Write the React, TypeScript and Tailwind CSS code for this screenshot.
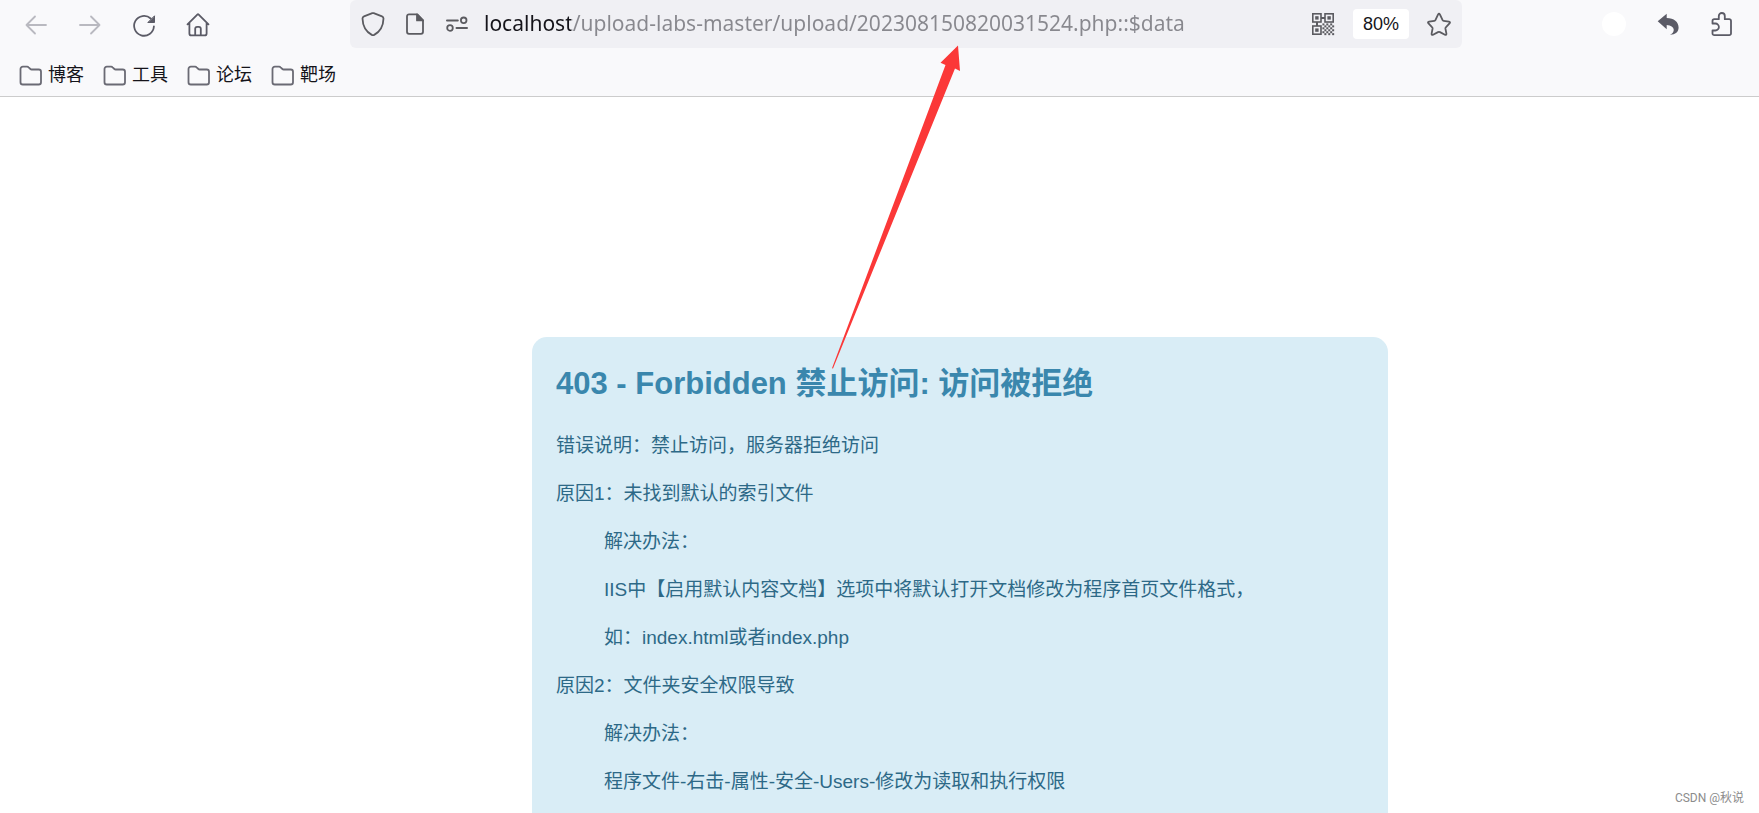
import type { ReactNode } from 'react';

const HAN = 'font-["Liberation_Sans","Noto_Sans_CJK_SC",sans-serif]';

function Icon({ children, className = '' }: { children: ReactNode; className?: string }) {
  return (
    <svg
      viewBox="0 0 24 24"
      aria-hidden="true"
      className={`size-6 shrink-0 overflow-visible ${className}`}
      fill="none"
      stroke="currentColor"
      strokeWidth="1.8"
      strokeLinecap="round"
      strokeLinejoin="round"
    >
      {children}
    </svg>
  );
}

function NavButton({ label, disabled, children }: { label: string; disabled?: boolean; children: ReactNode }) {
  return (
    <button
      type="button"
      aria-label={label}
      disabled={disabled}
      className="flex h-12 w-[54px] shrink-0 items-center justify-center text-[#5b5b66] disabled:text-[#b9b9c0]"
    >
      {children}
    </button>
  );
}

function BarButton({ label, children }: { label: string; children: ReactNode }) {
  return (
    <button
      type="button"
      aria-label={label}
      className="flex h-12 w-[42px] shrink-0 items-center justify-center text-[#5b5b60]"
    >
      {children}
    </button>
  );
}

const QR_CELLS = [0, 1, 2, 3, 4, 5].flatMap((row) =>
  [0, 1, 2, 3, 4, 5].filter((col) => (row + col) % 2 === 0).map((col) => [col, row]),
);

function QrIcon() {
  return (
    <Icon>
      {[
        [1, 1],
        [13.2, 1],
        [1, 13.2],
      ].map(([x, y]) => (
        <g key={`${x}-${y}`}>
          <rect x={x + 0.8} y={y + 0.8} width="8.2" height="8.2" strokeWidth="1.6" strokeLinejoin="miter" />
          <rect x={x + 3.2} y={y + 3.2} width="3.4" height="3.4" fill="currentColor" stroke="none" />
        </g>
      ))}
      <path d="M10 6h4M6 10v4" strokeWidth="2" strokeLinecap="butt" />
      {QR_CELLS.map(([col, row]) => (
        <rect
          key={`${col}-${row}`}
          x={11.4 + col * 1.95}
          y={11.4 + row * 1.95}
          width="2"
          height="2"
          fill="currentColor"
          stroke="none"
        />
      ))}
    </Icon>
  );
}

function FolderIcon() {
  return (
    <Icon className="text-[#6a6a74]">
      <path d="M1.5 5a2.3 2.3 0 0 1 2.3-2.3h4.3c.6 0 1.1.2 1.5.6l1.8 1.7c.3.3.7.5 1.2.5h7.1A2.3 2.3 0 0 1 22 7.8v10.4a2.3 2.3 0 0 1-2.3 2.3H3.8a2.3 2.3 0 0 1-2.3-2.3z" />
    </Icon>
  );
}

const BOOKMARKS = ['博客', '工具', '论坛', '靶场'];

const PARAGRAPHS = [
  { text: '错误说明：禁止访问，服务器拒绝访问' },
  { text: '原因1：未找到默认的索引文件' },
  { text: '解决办法：', nested: true },
  { text: 'IIS中【启用默认内容文档】选项中将默认打开文档修改为程序首页文件格式，', nested: true },
  { text: '如：index.html或者index.php', nested: true },
  { text: '原因2：文件夹安全权限导致' },
  { text: '解决办法：', nested: true },
  { text: '程序文件-右击-属性-安全-Users-修改为读取和执行权限', nested: true },
];

function Toolbar() {
  return (
    <div className="flex h-12 items-center pl-[9px] pr-2.5">
      <NavButton label="后退" disabled>
        <Icon>
          <path d="M2.5 13H22M11 4.5 2.5 13l8.5 8.5" />
        </Icon>
      </NavButton>
      <NavButton label="前进" disabled>
        <Icon>
          <path d="M2 13h19.5M13 4.5l8.5 8.5-8.5 8.5" />
        </Icon>
      </NavButton>
      <NavButton label="刷新">
        <Icon>
          <path d="M18.7 6.5A9.9 9.9 0 1 0 21.9 14.5" />
          <path d="M22.5 4.2v6.3h-6.3z" fill="currentColor" strokeWidth="1" />
        </Icon>
      </NavButton>
      <NavButton label="主页">
        <Icon>
          <path d="M1.5 12.3 11.3 2.6a1 1 0 0 1 1.4 0l9.8 9.7M3.4 10.8v10.6a2 2 0 0 0 2 2h13.2a2 2 0 0 0 2-2V10.8M9.2 23.2v-6.4a2 2 0 0 1 2-2h1.6a2 2 0 0 1 2 2v6.4" />
        </Icon>
      </NavButton>

      <div className="mx-[125px] flex h-12 min-w-0 flex-1 items-center rounded-md bg-[#f0f0f4] px-0.5">
        <BarButton label="跟踪保护">
          <Icon>
            <path d="M11.3 1.2a2 2 0 0 1 1.4 0l8.3 3.1q1.5.6 1.5 2.2C22.3 14 18.5 20 13.2 22.9q-1.2.6-2.4 0C5.5 20 1.7 14 1.5 6.5q0-1.6 1.5-2.2z" />
          </Icon>
        </BarButton>
        <BarButton label="站点信息">
          <Icon>
            <path d="M14.3 2.4H6a2 2 0 0 0-2 2v15.4a2 2 0 0 0 2 2h12a2 2 0 0 0 2-2V8.3z" />
            <path d="M14 2.5v5.900h6z" fill="currentColor" />
          </Icon>
        </BarButton>
        <BarButton label="权限">
          <Icon>
            <path d="M2 8.5h10.8M11.5 16H22" strokeWidth="2" />
            <circle cx="18.7" cy="8.3" r="2.8" />
            <circle cx="5" cy="16" r="2.8" />
          </Icon>
        </BarButton>
        <input
          type="text"
          aria-label="地址"
          defaultValue="localhost/upload-labs-master/upload/202308150820031524.php::$data"
          className='ml-1.5 h-10 min-w-0 flex-1 bg-[linear-gradient(90deg,#15141a_87px,#88888e_87px)] bg-clip-text pb-0.5 font-["Noto_Sans","Open_Sans",sans-serif] text-[21px] text-transparent caret-black outline-none'
        />
        <BarButton label="二维码">
          <QrIcon />
        </BarButton>
        <button
          type="button"
          aria-label="缩放 80%"
          className={`mx-[9px] h-[30px] w-14 shrink-0 rounded bg-white text-[18px] text-[#15141a] ${HAN}`}
        >
          80%
        </button>
        <BarButton label="收藏">
          <Icon>
            <path d="M11 2.6q1-1.8 2 0l2.6 5.5q.3.6 1 .7l5.3.8q1.9.4.6 1.8l-3.7 3.9q-.5.5-.4 1.2l1 5.200q.2 1.8-1.5 1l-4.9-2.6q-1-.4-2 0l-4.9 2.6q-1.7.8-1.5-1l1-5.200q.1-.7-.4-1.2L1.5 11.4Q.2 10 2.1 9.6l5.3-.8q.7-.1 1-.7z" />
          </Icon>
        </BarButton>
      </div>

      <NavButton label="账户">
        <span className="size-6 rounded-full bg-white" />
      </NavButton>
      <NavButton label="撤销">
        <Icon>
          <path
            d="M10.7 1.7V6C18 6 22.6 10 22.6 15.5c0 4.5-3.1 7.1-8.6 7.2C19.5 20.5 19.5 13.3 10.7 12.9v4.4l-9-8z"
            fill="currentColor"
            stroke="none"
          />
        </Icon>
      </NavButton>
      <NavButton label="扩展">
        <Icon>
          <path d="M2.5 11.5V9a1.8 1.8 0 0 1 1.8-1.8h4.5V4a3 3 0 0 1 6 0v3.2h4.4A1.8 1.8 0 0 1 21 9v12.4a1.8 1.8 0 0 1-1.8 1.8H4.3a1.8 1.8 0 0 1-1.8-1.8v-2.9h2.9a3.5 3.5 0 0 0 0-7z" />
        </Icon>
      </NavButton>
    </div>
  );
}

export default function App() {
  return (
    <div className={`relative flex h-screen flex-col overflow-hidden bg-white ${HAN}`}>
      <header className="shrink-0 border-b border-[#ccc] bg-[#f9f9fb]">
        <Toolbar />
        <nav aria-label="书签" className="flex h-12 items-center gap-[19px] px-[19px] pt-[7px]">
          {BOOKMARKS.map((name) => (
            <a key={name} href="#" className="flex h-9 items-center gap-[5px] text-[18px] text-[#15141a]">
              <FolderIcon />
              {name}
            </a>
          ))}
        </nav>
      </header>

      <main className="grid flex-1 grid-cols-[532fr_856fr_371fr] pt-60">
        <section className="col-start-2 rounded-t-[15px] bg-[#d9edf6] px-6 pt-[23px]">
          <h1 className="mb-[14px] text-[31px] font-bold leading-[48px] text-[#3a87ad]">
            403 - Forbidden 禁止访问: 访问被拒绝
          </h1>
          {PARAGRAPHS.map(({ text, nested }, index) => (
            <p
              key={index}
              className={`whitespace-nowrap text-[19px] leading-[48px] text-[#2d6987] ${nested ? 'pl-12' : ''}`}
            >
              {text}
            </p>
          ))}
        </section>
      </main>

      <svg
        aria-hidden="true"
        viewBox="0 0 130 324"
        className="pointer-events-none absolute left-[832px] top-[45px] h-[324px] w-[130px]"
      >
        <path d="M126 .5 128 26 123 23.5 1 323.5 0 323.3 113.5 20 108.5 17.7z" fill="#fb3838" />
      </svg>

      <span className='absolute bottom-1.5 right-[15px] font-["Roboto","Noto_Sans_CJK_SC",sans-serif] text-[12px] leading-[18px] text-[#8c8c8c]'>
        CSDN @秋说
      </span>
    </div>
  );
}
